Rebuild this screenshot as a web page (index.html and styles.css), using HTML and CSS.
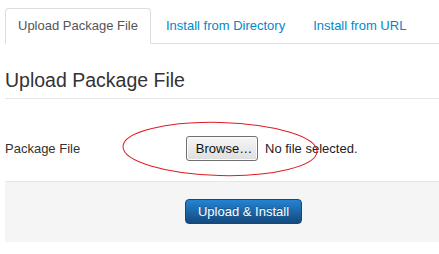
FILE: index.html
```html
<!DOCTYPE html>
<html lang="en">
<head>
    <meta charset="UTF-8">
    <title>Extension Manager: Install</title>
    <link rel="stylesheet" href="styles.css">
</head>
<body>
    <div class="page">
        <!-- Install method tabs -->
        <ul class="tabs">
            <li class="tab active"><a href="#package">Upload Package File</a></li>
            <li class="tab"><a href="#directory">Install from Directory</a></li>
            <li class="tab"><a href="#url">Install from URL</a></li>
        </ul>

        <form class="upload-form">
            <fieldset>
                <legend>Upload Package File</legend>
                <div class="control-group">
                    <label class="control-label" for="install_package">Package File</label>
                    <div class="controls">
                        <button type="button" class="browse" id="install_package">Browse…</button>
                        <span class="file-name">No file selected.</span>
                    </div>
                </div>
                <div class="form-actions">
                    <button type="button" class="btn-primary">Upload &amp; Install</button>
                </div>
            </fieldset>
        </form>

        <!-- hand drawn highlight -->
        <svg class="marker" width="204" height="64" viewBox="0 0 204 64">
            <ellipse cx="101" cy="31" rx="97" ry="26.5" transform="rotate(1.5 101 31)" fill="none" stroke="#e01b24" stroke-width="1"/>
        </svg>
    </div>
</body>
</html>
```

FILE: styles.css
```css
/* General page styles */
body {
    font-family: "Liberation Sans", Arial, sans-serif;
    font-size: 13px;
    color: #333;
    background-color: #fff;
    margin: 0;
    overflow: hidden;
}

.page {
    position: relative;
    padding: 8px 0 0 5px;
}

/* Tabs */
.tabs {
    display: flex;
    list-style: none;
    margin: 0 0 18px 0;
    padding: 0;
    border-bottom: 1px solid #ddd;
}

.tab {
    margin-right: 2px;
    margin-bottom: -1px;
}

.tab a {
    display: block;
    padding: 8px 12px;
    line-height: 18px;
    color: #0088cc;
    text-decoration: none;
    border: 1px solid transparent;
    border-radius: 4px 4px 0 0;
}

.tab.active a {
    color: #555;
    background-color: #fff;
    border-color: #ddd #ddd transparent;
}

/* Form */
fieldset {
    border: none;
    margin: 0;
    padding: 0;
}

legend {
    display: block;
    width: 100%;
    padding: 0;
    margin: 0 0 37px 0;
    font-size: 19.5px;
    line-height: 36px;
    color: #333;
    border-bottom: 1px solid #e5e5e5;
}

.control-group {
    display: flex;
    align-items: center;
    height: 25px;
    margin-bottom: 20px;
}

.control-label {
    width: 181px;
    color: #333;
}

.controls {
    display: flex;
    align-items: center;
}

.browse {
    width: 72px;
    height: 25px;
    padding: 0 0 0 4px;
    font-family: "Liberation Sans", Arial, sans-serif;
    font-size: 13px;
    color: #111;
    background: linear-gradient(to bottom, #f6f6f6, #dedede);
    border: 1px solid #707070;
    border-radius: 3px;
    box-shadow: inset 0 0 0 1px #fcfcfc;
}

.file-name {
    margin-left: 7px;
    color: #222;
}

.form-actions {
    padding: 17px 0 18px 180px;
    background-color: #f5f5f5;
    border-top: 1px solid #e5e5e5;
}

.btn-primary {
    display: block;
    width: 117px;
    height: 25px;
    padding: 0;
    font-family: "Liberation Sans", Arial, sans-serif;
    font-size: 13px;
    color: #fff;
    background: linear-gradient(to bottom, #2384d3, #15497c);
    border: 1px solid #14477a;
    border-radius: 4px;
    text-shadow: 0 -1px 0 rgba(0, 0, 0, 0.25);
}

/* red highlight drawn over the file input */
.marker {
    position: absolute;
    left: 119px;
    top: 118px;
}
```
